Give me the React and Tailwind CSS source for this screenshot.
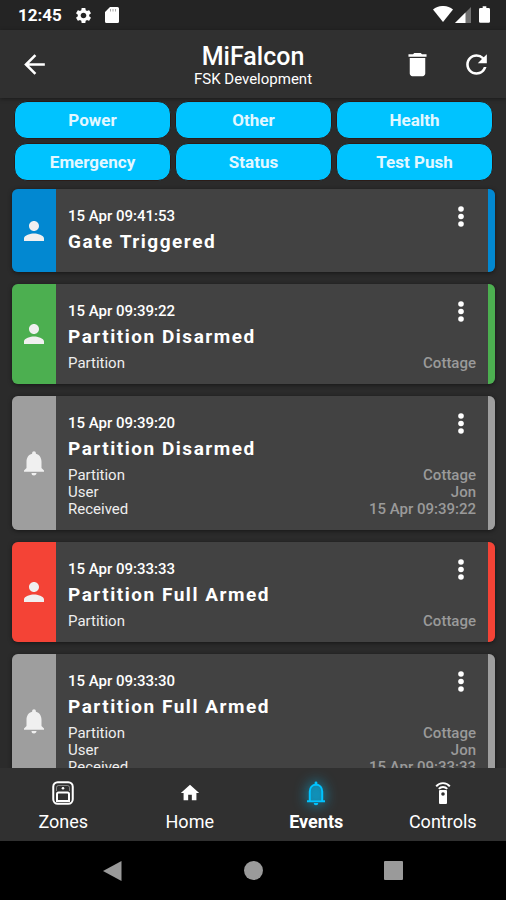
import { useState } from 'react';
import { MdArrowBack, MdDelete, MdHome, MdNotifications, MdPerson, MdRefresh, MdSettings } from 'react-icons/md';

const FILTERS = ['Power', 'Other', 'Health', 'Emergency', 'Status', 'Test Push'];

const COLORS = {
  blue: 'bg-[#0288d1]',
  green: 'bg-[#4caf50]',
  red: 'bg-[#f44336]',
  grey: 'bg-[#9e9e9e]',
};

const EVENTS = [
  { id: 1, time: '15 Apr 09:41:53', title: 'Gate Triggered', color: 'blue', icon: MdPerson, rows: [] },
  { id: 2, time: '15 Apr 09:39:22', title: 'Partition Disarmed', color: 'green', icon: MdPerson, rows: [['Partition', 'Cottage']] },
  {
    id: 3, time: '15 Apr 09:39:20', title: 'Partition Disarmed', color: 'grey', icon: MdNotifications,
    rows: [['Partition', 'Cottage'], ['User', 'Jon'], ['Received', '15 Apr 09:39:22']],
  },
  { id: 4, time: '15 Apr 09:33:33', title: 'Partition Full Armed', color: 'red', icon: MdPerson, rows: [['Partition', 'Cottage']] },
  {
    id: 5, time: '15 Apr 09:33:30', title: 'Partition Full Armed', color: 'grey', icon: MdNotifications,
    rows: [['Partition', 'Cottage'], ['User', 'Jon'], ['Received', '15 Apr 09:33:33']],
  },
];

function ZonesIcon() {
  return (
    <svg width="22" height="24" viewBox="0 0 22 24" fill="none" stroke="currentColor">
      <rect x="1.25" y="1.25" width="19.5" height="21.5" rx="4.5" strokeWidth="2" />
      <path d="M4.5 10V6.5a2 2 0 0 1 2-2h9a2 2 0 0 1 2 2V10" strokeWidth="0.8" strokeOpacity="0.5" />
      <path d="M5 20v-7a1.500 1.500 0 0 1 1.500-1.500h9A1.500 1.500 0 0 1 17 13v7z" strokeWidth="2" />
      <circle cx="11" cy="7.2" r="1.3" fill="currentColor" stroke="none" />
    </svg>
  );
}

function BellIcon() {
  return (
    <svg width="20" height="24" viewBox="0 0 20 24" fill="none" className="overflow-visible text-[#00c3ff] drop-shadow-[0_0_7px_#00c3ff]">
      <path d="M4 19v-8.500C4 6.500 6.500 4 10 4s6 2.500 6 6.500V19z" fill="currentColor" fillOpacity="0.45" />
      <path d="M3.800 19.500v-9C3.800 6.500 6.300 3.700 10 3.700s6.200 2.800 6.200 6.800v9M1 20.200h18" stroke="currentColor" strokeWidth="2" />
      <path d="M8.600 3.500V1.800a1.400 1.400 0 0 1 2.800 0v1.700zM7.700 22h4.600a2.300 2.300 0 0 1-4.600 0z" fill="currentColor" />
    </svg>
  );
}

function RemoteIcon() {
  return (
    <svg width="16" height="24" viewBox="0 0 16 24" fill="none">
      <path d="M1.200 5.300C4.600 1 11.400 1 14.800 5.300M3.800 7.900c2.200-2.600 6.200-2.600 8.400 0" stroke="currentColor" strokeWidth="1.900" />
      <path fillRule="evenodd" d="M5 9h6a1 1 0 0 1 1 1v12a1 1 0 0 1-1 1H5a1 1 0 0 1-1-1V10a1 1 0 0 1 1-1zm3 2.200a1.800 1.800 0 1 0 0 3.600 1.800 1.800 0 0 0 0-3.600z" fill="currentColor" />
    </svg>
  );
}

const TABS = [
  { name: 'Zones', icon: <ZonesIcon /> },
  { name: 'Home', icon: <MdHome size={22} /> },
  { name: 'Events', icon: <BellIcon /> },
  { name: 'Controls', icon: <RemoteIcon /> },
];

function StatusBar() {
  return (
    <div className="flex h-[30px] shrink-0 items-center bg-[#242424] pr-4 pl-[18px]">
      <span className="text-[17px] leading-5 font-bold">12:45</span>
      <MdSettings size={19} className="ml-3" />
      <svg width="14" height="16" viewBox="0 0 14 16" className="ml-3">
        <path fill="currentColor" fillRule="evenodd" d="M5 0h7.500A1.500 1.500 0 0 1 14 1.500v13a1.500 1.500 0 0 1-1.500 1.500h-11A1.500 1.500 0 0 1 0 14.500V5z" />
        <path stroke="#242424" strokeOpacity="0.4" d="M5.500 2v2.500M8 2v2.500M10.500 2v2.500" />
      </svg>
      <div className="ml-auto flex items-center pb-0.5">
        <svg width="20" height="16" viewBox="0 0 20 16">
          <path fill="currentColor" d="M0 3.500C5.700-1.200 14.300-1.200 20 3.500L10 16z" />
        </svg>
        <svg width="16" height="16" viewBox="0 0 16 16" className="mt-0.5 ml-0.5">
          <path fill="currentColor" fillOpacity="0.35" d="M16 0v16H0z" />
          <path fill="currentColor" d="M10.500 5.500V16H0z" />
        </svg>
        <svg width="11" height="17" viewBox="0 0 12 18" className="ml-2">
          <path fill="currentColor" d="M4 0h4v2h2.500A1.500 1.500 0 0 1 12 3.500v13a1.500 1.500 0 0 1-1.500 1.500h-9A1.500 1.500 0 0 1 0 16.500v-13A1.500 1.500 0 0 1 1.500 2H4z" />
        </svg>
      </div>
    </div>
  );
}

function Header() {
  return (
    <header className="z-10 grid h-[68px] shrink-0 grid-cols-[1fr_auto_1fr] items-center bg-[#303030] px-3.5 shadow-[0_1px_4px_rgba(0,0,0,0.4)]">
      <button aria-label="Back" className="justify-self-start pl-[5px]"><MdArrowBack size={31} /></button>
      <div className="pt-0.5 text-center">
        <h1 className="text-[25px] leading-7 font-medium">MiFalcon</h1>
        <p className="text-[15px] leading-4">FSK Development</p>
      </div>
      <div className="flex gap-7 justify-self-end">
        <button aria-label="Delete events"><MdDelete size={31} /></button>
        <button aria-label="Refresh"><MdRefresh size={31} /></button>
      </div>
    </header>
  );
}

function EventCard({ event }) {
  const Icon = event.icon;
  return (
    <article className="flex shrink-0 overflow-hidden rounded-md bg-[#424242] shadow-[0_1px_4px_rgba(0,0,0,0.5)]">
      <div className={`flex w-11 shrink-0 items-center justify-center text-[#f0f0f0] ${COLORS[event.color]}`}>
        <Icon size={30} />
      </div>
      <div className="min-w-0 flex-1 pt-[17px] pr-3 pb-3 pl-3">
        <div className="flex items-start justify-between">
          <div>
            <time className="block text-[15px] leading-5 font-medium">{event.time}</time>
            <h2 className="mt-1 text-[19px] leading-6 font-bold tracking-[0.08em]">{event.title}</h2>
          </div>
          <button aria-label={`Options for ${event.title}`} className="px-3">
            <svg width="6" height="22" viewBox="0 0 6 22" fill="currentColor">
              <circle cx="3" cy="3" r="2.800" />
              <circle cx="3" cy="10.500" r="2.800" />
              <circle cx="3" cy="18" r="2.800" />
            </svg>
          </button>
        </div>
        <dl className="mt-1.5">
          {event.rows.map(([label, value]) => (
            <div key={label} className="flex justify-between text-[15px] leading-[17px]">
              <dt className="text-[#eeeeee]">{label}</dt>
              <dd className="font-medium text-[#9a9a9a]">{value}</dd>
            </div>
          ))}
        </dl>
      </div>
      <div className={`w-[7px] shrink-0 ${COLORS[event.color]}`} />
    </article>
  );
}

export default function App() {
  const [tab, setTab] = useState('Events');

  return (
    <div className="flex h-screen flex-col bg-[#2b2b2b] font-[Roboto,sans-serif] text-white">
      <StatusBar />
      <Header />
      <main className="flex min-h-0 flex-1 flex-col overflow-hidden">
        <div className="grid shrink-0 grid-cols-3 gap-1 pt-[3px] pr-[13px] pl-3.5">
          {FILTERS.map(f => (
            <button key={f} className="h-[38px] rounded-[13px] border border-[#2a1c18] bg-[#00c3ff] pt-0.5 text-[17px] font-bold text-[#e3f7ff]">{f}</button>
          ))}
        </div>
        <div className="flex flex-col gap-3 pt-2 pr-[11px] pl-3">
          {EVENTS.map(e => <EventCard key={e.id} event={e} />)}
        </div>
      </main>
      <nav className="z-10 grid h-[73px] shrink-0 grid-cols-4 bg-[#303030]">
        {TABS.map(t => (
          <button key={t.name} onClick={() => setTab(t.name)} className="flex flex-col items-center pt-[13px]">
            <span className="flex h-6 items-center">{t.icon}</span>
            <span className={`mt-[5px] text-lg leading-6 ${tab === t.name ? 'font-bold' : ''}`}>{t.name}</span>
          </button>
        ))}
      </nav>
      <div className="flex h-[59px] shrink-0 items-center justify-center gap-[121px] bg-black text-[#9a9a9a]">
        <button aria-label="System back">
          <svg width="20" height="20" viewBox="0 0 20 20" fill="currentColor"><path d="M18.500 0v20L0 10z" /></svg>
        </button>
        <button aria-label="System home" className="size-[19px] rounded-full bg-[#9a9a9a]" />
        <button aria-label="Recent apps" className="size-[19px] rounded-[1px] bg-[#9a9a9a]" />
      </div>
    </div>
  );
}
